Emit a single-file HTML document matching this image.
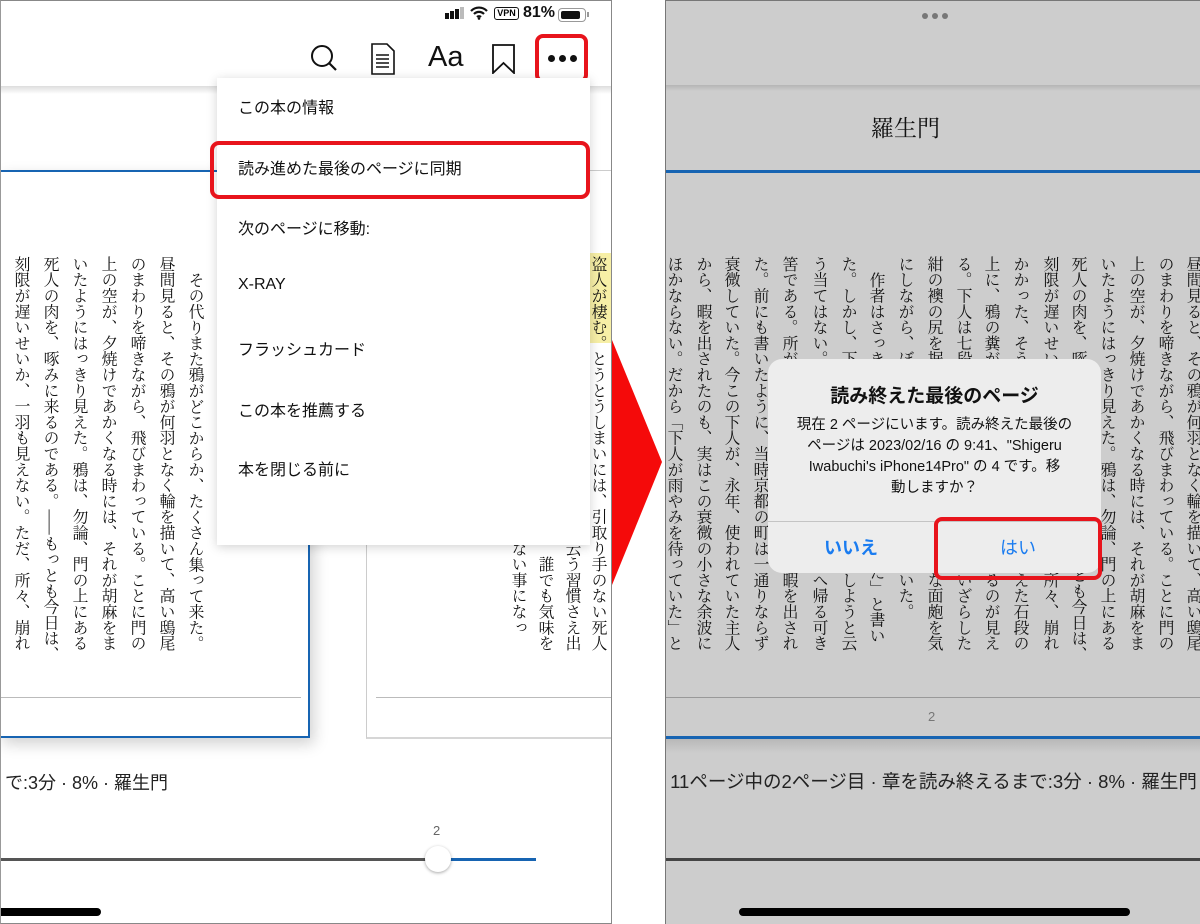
<!DOCTYPE html>
<html><head><meta charset="utf-8">
<style>
*{margin:0;padding:0;box-sizing:border-box}
body{width:1200px;height:924px;background:#fff;position:relative;overflow:hidden;font-family:"Liberation Sans","Noto Sans CJK JP",sans-serif}
.abs{position:absolute}
.panel{position:absolute;top:0;height:924px;overflow:hidden}
.col{position:absolute;writing-mode:vertical-rl;font-family:"Noto Serif CJK JP","Noto Serif CJK SC",serif;font-size:15.8px;line-height:16px;width:16px;white-space:nowrap;color:#111}
.mi{position:absolute;left:21px;font-size:16px;color:#111}
</style></head><body>

<!-- LEFT PANEL -->
<div class="panel" style="left:0;width:612px;background:#fff;border:1px solid #888;border-left:1px solid #999">
  <div class="abs" style="left:444px;top:12px;width:4px;height:6px;background:#111"></div>
  <div class="abs" style="left:449px;top:10px;width:4px;height:8px;background:#111"></div>
  <div class="abs" style="left:454px;top:8px;width:4px;height:10px;background:#111"></div>
  <div class="abs" style="left:459px;top:6px;width:4px;height:12px;background:#bbb"></div>
  <svg class="abs" style="left:469px;top:5px" width="18" height="14" viewBox="0 0 18 14"><path d="M1 5a11 11 0 0 1 16 0M4 8a7 7 0 0 1 10 0M7 11a3 3 0 0 1 4 0" stroke="#111" stroke-width="2.2" fill="none"/><circle cx="9" cy="12.5" r="1.3" fill="#111"/></svg>
  <div class="abs" style="left:493px;top:6px;width:25px;height:13px;border:1.5px solid #111;border-radius:3px;font-size:9px;font-weight:bold;line-height:10px;text-align:center">VPN</div>
  <div class="abs" style="left:522px;top:3px;font-size:16px;font-weight:bold;color:#111">81%</div>
  <div class="abs" style="left:557px;top:7px;width:28px;height:14px;border:1.5px solid #999;border-radius:4px;padding:1.5px"><div style="width:19px;height:8px;background:#111;border-radius:2px"></div></div>
  <div class="abs" style="left:586px;top:11px;width:2px;height:5px;background:#999"></div>

  <svg class="abs" style="left:308px;top:42px" width="30" height="30" viewBox="0 0 30 30"><circle cx="13" cy="13" r="10" stroke="#111" stroke-width="2" fill="none"/><path d="M20 20l7 7" stroke="#111" stroke-width="2.2"/></svg>
  <svg class="abs" style="left:370px;top:42px" width="24" height="32" viewBox="0 0 24 32"><path d="M1 1h15l7 7v23H1z" stroke="#111" stroke-width="1.6" fill="none"/><path d="M5 12h13M5 16h13M5 20h13M5 24h13" stroke="#111" stroke-width="1.6"/></svg>
  <div class="abs" style="left:427px;top:40px;font-size:29px;color:#111">Aa</div>
  <svg class="abs" style="left:490px;top:43px" width="26" height="30" viewBox="0 0 26 30"><path d="M2 1h21v28l-10.5-10L2 29z" stroke="#111" stroke-width="1.8" fill="none"/></svg>
  <div class="abs" style="left:547px;top:54px;width:7px;height:7px;border-radius:50%;background:#111"></div>
  <div class="abs" style="left:558px;top:54px;width:7px;height:7px;border-radius:50%;background:#111"></div>
  <div class="abs" style="left:569px;top:54px;width:7px;height:7px;border-radius:50%;background:#111"></div>
  <div class="abs" style="left:534px;top:33px;width:53px;height:49px;border:4px solid #e8141c;border-radius:8px"></div>
  <div class="abs" style="left:0;top:85px;width:612px;height:8px;background:linear-gradient(#ddd,#fff)"></div>

  <div class="abs" style="left:-2px;top:169px;width:311px;height:568px;background:#fff;border-top:2px solid #1764b2;border-right:2px solid #1764b2;border-bottom:2px solid #1764b2;box-shadow:4px 6px 14px rgba(0,0,0,.18)"></div>
  <div class="abs" style="left:0;top:696px;width:300px;height:1px;background:#bbb"></div>
  <div class="abs" style="left:365px;top:169px;width:260px;height:569px;background:#fff;border-left:1px solid #ccc;border-bottom:2px solid #d6d6d6;border-top:1px solid #ccc"></div>
  <div class="abs" style="left:375px;top:696px;width:240px;height:1px;background:#bbb"></div>

  <div class="col" style="left:187px;top:271px">その代りまた鴉がどこからか、たくさん集って来た。</div>
  <div class="col" style="left:158px;top:255px">昼間見ると、その鴉が何羽となく輪を描いて、高い鴟尾</div>
  <div class="col" style="left:129px;top:255px">のまわりを啼きながら、飛びまわっている。ことに門の</div>
  <div class="col" style="left:100px;top:255px">上の空が、夕焼けであかくなる時には、それが胡麻をま</div>
  <div class="col" style="left:71px;top:255px">いたようにはっきり見えた。鴉は、勿論、門の上にある</div>
  <div class="col" style="left:42px;top:255px">死人の肉を、啄みに来るのである。——もっとも今日は、</div>
  <div class="col" style="left:13px;top:255px">刻限が遅いせいか、一羽も見えない。ただ、所々、崩れ</div>

  <div class="abs" style="left:588px;top:252px;width:22px;height:90px;background:#f7efa6"></div>
  <div class="col" style="left:590px;top:255px">盗人が棲む。とうとうしまいには、引取り手のない死人</div>
  <div class="col" style="left:564px;top:255px">を、この門へ持って来て、棄てて行くと云う習慣さえ出</div>
  <div class="col" style="left:537px;top:255px">来た。そこで、日の目が見えなくなると、誰でも気味を</div>
  <div class="col" style="left:510px;top:255px">悪がって、この門の近所へは足ぶみをしない事になっ</div>

  <div class="abs" style="left:216px;top:77px;width:373px;height:467px;background:#fff;box-shadow:0 2px 10px rgba(0,0,0,.18)">
    <div class="mi" style="top:16px">この本の情報</div>
    <div class="mi" style="top:77px">読み進めた最後のページに同期</div>
    <div class="mi" style="top:137px">次のページに移動:</div>
    <div class="mi" style="top:198px">X-RAY</div>
    <div class="mi" style="top:258px">フラッシュカード</div>
    <div class="mi" style="top:319px">この本を推薦する</div>
    <div class="mi" style="top:378px">本を閉じる前に</div>
  </div>
  <div class="abs" style="left:209px;top:140px;width:380px;height:58px;border:4px solid #e8141c;border-radius:9px"></div>

  <div class="abs" style="left:4px;top:768px;font-size:18px;color:#222">で:3分 · 8% · 羅生門</div>
  <div class="abs" style="left:432px;top:822px;font-size:13px;color:#666">2</div>
  <div class="abs" style="left:0;top:857px;width:430px;height:3px;background:#555"></div>
  <div class="abs" style="left:445px;top:857px;width:90px;height:3px;background:#1764b2"></div>
  <div class="abs" style="left:424px;top:845px;width:26px;height:26px;border-radius:50%;background:#fff;box-shadow:0 1px 3px rgba(0,0,0,.35)"></div>
  <div class="abs" style="left:-10px;top:907px;width:110px;height:8px;border-radius:4px;background:#000"></div>
</div>

<svg class="abs" style="left:612px;top:340px" width="54" height="245" viewBox="0 0 54 245"><path d="M0 0L50 122L0 245z" fill="#f50a0a"/></svg>

<!-- RIGHT PANEL -->
<div class="panel" style="left:665px;width:535px;background:#cdcdcd;border-left:1px solid #777;border-top:1px solid #777">
  <div class="abs" style="left:256px;top:12px;width:6px;height:6px;border-radius:50%;background:#777"></div>
  <div class="abs" style="left:266px;top:12px;width:6px;height:6px;border-radius:50%;background:#777"></div>
  <div class="abs" style="left:276px;top:12px;width:6px;height:6px;border-radius:50%;background:#777"></div>
  <div class="abs" style="left:0;top:84px;width:535px;height:6px;background:linear-gradient(#b5b5b5,#cdcdcd)"></div>
  <div class="abs" style="left:205px;top:109px;font-family:'Noto Serif CJK JP','Noto Serif CJK SC',serif;font-size:23px;color:#111">羅生門</div>
  <div class="abs" style="left:0;top:169px;width:535px;height:3px;background:#1764b2"></div>

  <div class="col" style="left:520px;top:255px">昼間見ると、その鴉が何羽となく輪を描いて、高い鴟尾</div>
  <div class="col" style="left:492px;top:255px">のまわりを啼きながら、飛びまわっている。ことに門の</div>
  <div class="col" style="left:463px;top:255px">上の空が、夕焼けであかくなる時には、それが胡麻をま</div>
  <div class="col" style="left:434px;top:255px">いたようにはっきり見えた。鴉は、勿論、門の上にある</div>
  <div class="col" style="left:405px;top:255px">死人の肉を、啄みに来るのである。——もっとも今日は、</div>
  <div class="col" style="left:377px;top:255px">刻限が遅いせいか、一羽も見えない。ただ、所々、崩れ</div>
  <div class="col" style="left:347px;top:255px">かかった、そうしてその崩れ目に長い草のはえた石段の</div>
  <div class="col" style="left:318px;top:255px">上に、鴉の糞が、点々と白くこびりついているのが見え</div>
  <div class="col" style="left:290px;top:255px">る。下人は七段ある石段の一番上の段に、洗いざらした</div>
  <div class="col" style="left:261px;top:255px">紺の襖の尻を据えて、右の頬に出来た、大きな面皰を気</div>
  <div class="col" style="left:232px;top:255px">にしながら、ぼんやり、雨のふるのを眺めていた。</div>
  <div class="col" style="left:203px;top:271px">作者はさっき、「下人が雨やみを待っていた」と書い</div>
  <div class="col" style="left:175px;top:255px">た。しかし、下人は雨がやんでも、格別どうしようと云</div>
  <div class="col" style="left:146px;top:255px">う当てはない。ふだんなら、勿論、主人の家へ帰る可き</div>
  <div class="col" style="left:116px;top:255px">筈である。所がその主人からは、四五日前に暇を出され</div>
  <div class="col" style="left:87px;top:255px">た。前にも書いたように、当時京都の町は一通りならず</div>
  <div class="col" style="left:58px;top:255px">衰微していた。今この下人が、永年、使われていた主人</div>
  <div class="col" style="left:30px;top:255px">から、暇を出されたのも、実はこの衰微の小さな余波に</div>
  <div class="col" style="left:1px;top:255px">ほかならない。だから「下人が雨やみを待っていた」と</div>

  <div class="abs" style="left:0;top:696px;width:535px;height:1px;background:#999"></div>
  <div class="abs" style="left:262px;top:708px;font-size:13px;color:#777">2</div>
  <div class="abs" style="left:0;top:735px;width:535px;height:3px;background:#1764b2"></div>
  <div class="abs" style="left:0;top:738px;width:535px;height:14px;background:linear-gradient(#b8b8b8,#cdcdcd)"></div>
  <div class="abs" style="left:-10px;top:767px;width:555px;text-align:center;font-size:18.5px;color:#222;white-space:nowrap">11ページ中の2ページ目 · 章を読み終えるまで:3分 · 8% · 羅生門</div>
  <div class="abs" style="left:0;top:857px;width:535px;height:3px;background:#444"></div>
  <div class="abs" style="left:73px;top:907px;width:391px;height:8px;border-radius:4px;background:#000"></div>

  <div class="abs" style="left:102px;top:358px;width:333px;height:214px;background:#ededed;border-radius:14px;overflow:hidden">
    <div class="abs" style="left:0;top:22px;width:333px;text-align:center;font-size:19px;font-weight:bold;color:#111">読み終えた最後のページ</div>
    <div class="abs" style="left:0;top:56px;width:333px;text-align:center;font-size:14.5px;line-height:21px;color:#111;white-space:nowrap">現在 2 ページにいます。読み終えた最後の<br>ページは 2023/02/16 の 9:41、"Shigeru<br>Iwabuchi's iPhone14Pro" の 4 です。移<br>動しますか？</div>
    <div class="abs" style="left:0;top:162px;width:333px;height:1px;background:#c4c4c4"></div>
    <div class="abs" style="left:166px;top:163px;width:1px;height:52px;background:#c4c4c4"></div>
    <div class="abs" style="left:0;top:175px;width:166px;text-align:center;font-size:18px;font-weight:bold;color:#1a7cf0">いいえ</div>
    <div class="abs" style="left:167px;top:175px;width:166px;text-align:center;font-size:18px;color:#1a7cf0">はい</div>
  </div>
  <div class="abs" style="left:268px;top:516px;width:168px;height:63px;border:4px solid #e8141c;border-radius:8px"></div>
</div>
</body></html>
